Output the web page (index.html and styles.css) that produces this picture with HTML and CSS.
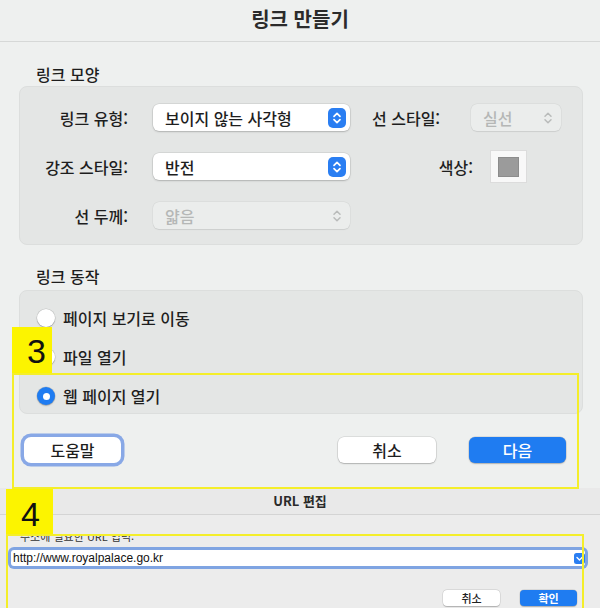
FILE: index.html
```html
<!DOCTYPE html>
<html lang="ko">
<head>
<meta charset="utf-8">
<title>링크 만들기</title>
<link rel="stylesheet" href="styles.css">
</head>
<body>
<div class="screen">
  <div class="dlg">
    <div class="titlebar"><h1 class="title">링크 만들기</h1></div>
    <div class="body">
      <div class="sec-label">링크 모양</div>
      <div class="panel panel-look">
        <div class="row">
          <span class="lbl">링크 유형:</span>
          <div class="select"><span>보이지 않는 사각형</span>
            <svg class="stepper" width="18" height="20" viewBox="0 0 18 20"><rect width="18" height="20" rx="5" fill="#2a7ef2"/><path d="M6 8.3 9 5.3 12 8.3M6 11.7 9 14.7 12 11.7" fill="none" stroke="#fff" stroke-width="1.7" stroke-linecap="round" stroke-linejoin="round"/></svg>
          </div>
          <span class="lbl2">선 스타일:</span>
          <div class="select select-sm disabled"><span>실선</span>
            <svg class="stepper" width="18" height="20" viewBox="0 0 18 20"><path d="M6 8.3 9 5.3 12 8.3M6 11.7 9 14.7 12 11.7" fill="none" stroke="#b9bbba" stroke-width="1.5" stroke-linecap="round" stroke-linejoin="round"/></svg>
          </div>
        </div>
        <div class="row">
          <span class="lbl">강조 스타일:</span>
          <div class="select"><span>반전</span>
            <svg class="stepper" width="18" height="20" viewBox="0 0 18 20"><rect width="18" height="20" rx="5" fill="#2a7ef2"/><path d="M6 8.3 9 5.3 12 8.3M6 11.7 9 14.7 12 11.7" fill="none" stroke="#fff" stroke-width="1.7" stroke-linecap="round" stroke-linejoin="round"/></svg>
          </div>
          <span class="lbl3">색상:</span>
          <div class="well"><span class="swatch"></span></div>
        </div>
        <div class="row">
          <span class="lbl">선 두께:</span>
          <div class="select disabled"><span>얇음</span>
            <svg class="stepper" width="18" height="20" viewBox="0 0 18 20"><path d="M6 8.3 9 5.3 12 8.3M6 11.7 9 14.7 12 11.7" fill="none" stroke="#b9bbba" stroke-width="1.5" stroke-linecap="round" stroke-linejoin="round"/></svg>
          </div>
        </div>
      </div>
      <div class="sec-label sec-label2">링크 동작</div>
      <div class="panel panel-action">
        <div class="radio-row"><span class="radio"></span><span>페이지 보기로 이동</span></div>
        <div class="radio-row"><span class="radio"></span><span>파일 열기</span></div>
        <div class="radio-row"><span class="radio on"><span class="dot"></span></span><span>웹 페이지 열기</span></div>
      </div>
      <div class="btn-row">
        <button class="btn btn-help">도움말</button>
        <span class="spacer"></span>
        <button class="btn btn-cancel">취소</button>
        <button class="btn btn-primary">다음</button>
      </div>
    </div>
  </div>
  <div class="dlg2">
    <div class="titlebar2">URL 편집</div>
    <div class="body2">
      <div class="url-label"><span>주소에 필요한 URL 입력:</span></div>
      <div class="url-field"><span>http://www.royalpalace.go.kr</span>
        <svg width="11" height="11" viewBox="0 0 11 11"><rect width="11" height="11" rx="2.5" fill="#2a7ef2"/><path d="M3 4.6 5.5 7.1 8 4.6" fill="none" stroke="#fff" stroke-width="1.4" stroke-linecap="round" stroke-linejoin="round"/></svg>
      </div>
      <div class="btn-row2">
        <button class="btn2">취소</button>
        <button class="btn2 btn2-primary">확인</button>
      </div>
    </div>
  </div>
  <div class="badge badge3">3</div>
  <div class="hl hl1"></div>
  <div class="badge badge4">4</div>
  <div class="hl hl2"></div>
</div>
</body>
</html>
```
FILE: styles.css
```css
html, body {
  margin: 0;
  padding: 0;
}
body {
  width: 600px;
  height: 608px;
  overflow: hidden;
  background: #eef0ef;
  font-family: "Noto Sans CJK KR", "Noto Sans", sans-serif;
  font-weight: 500;
  color: #1e1e1e;
}
.screen {
  position: relative;
  width: 600px;
  height: 608px;
}
.dlg {
  height: 488px;
  background: #eef0ef;
}
.titlebar {
  height: 41px;
  border-bottom: 1px solid #d6d8d7;
  display: flex;
  justify-content: center;
  align-items: center;
}
.title {
  margin: 0;
  font-size: 20px;
  font-weight: 700;
  line-height: 24px;
  color: #2b2b2b;
  padding-bottom: 4px;
}
.body {
  padding: 0 17px 0 19px;
}
.sec-label {
  font-size: 16px;
  line-height: 20px;
  padding-left: 17px;
  margin: 22px 0 2px;
}
.sec-label2 {
  margin: 21px 0 4px;
}
.panel {
  box-sizing: border-box;
  background: #e4e6e5;
  border: 1px solid #dcdedd;
  border-radius: 8px;
}
.panel-look {
  height: 159px;
  padding-top: 17px;
  display: flex;
  flex-direction: column;
  gap: 22px;
}
.row {
  display: flex;
  align-items: center;
  height: 27px;
  font-size: 16px;
}
.lbl {
  width: 108px;
  text-align: right;
  margin-right: 25px;
  white-space: nowrap;
}
.lbl2 {
  width: 77px;
  margin-left: 22px;
  margin-right: 22px;
  white-space: nowrap;
}
.lbl3 {
  width: 123px;
  text-align: right;
  margin-right: 17px;
}
.select {
  box-sizing: border-box;
  width: 197px;
  height: 27px;
  background: #fff;
  border-radius: 6px;
  box-shadow: 0 0 0 0.5px rgba(0, 0, 0, 0.12), 0 1px 2px rgba(0, 0, 0, 0.18);
  display: flex;
  align-items: center;
  justify-content: space-between;
  padding: 0 4px 0 12px;
  font-size: 16px;
  line-height: 20px;
}
.select-sm {
  width: 90px;
  padding-left: 12px;
}
.disabled {
  background: #ebedec;
  color: #b5b7b6;
  box-shadow: 0 0 0 0.5px rgba(0, 0, 0, 0.05), 0 0.5px 1px rgba(0, 0, 0, 0.08);
}
.stepper {
  display: block;
  flex: none;
}
.well {
  box-sizing: border-box;
  width: 37px;
  height: 33px;
  margin: -3px 0;
  background: #f8f8f8;
  border: 1px solid #dcdcdc;
  display: flex;
  align-items: center;
  justify-content: center;
}
.swatch {
  width: 21px;
  height: 20px;
  box-sizing: border-box;
  background: #9b9b9b;
  border: 1px solid #8c8c8c;
}
.panel-action {
  height: 124px;
  padding-top: 15px;
  display: flex;
  flex-direction: column;
  gap: 15px;
}
.radio-row {
  display: flex;
  align-items: center;
  height: 24px;
  padding-left: 17px;
  gap: 8px;
  font-size: 16px;
  line-height: 20px;
}
.radio {
  width: 18px;
  height: 18px;
  border-radius: 50%;
  background: #fff;
  box-shadow: 0 0 0 0.5px rgba(0, 0, 0, 0.15), 0 1px 1.5px rgba(0, 0, 0, 0.2);
  display: flex;
  align-items: center;
  justify-content: center;
  flex: none;
}
.radio.on {
  background: #1f7cf1;
}
.dot {
  width: 7px;
  height: 7px;
  border-radius: 50%;
  background: #fff;
}
.btn-row {
  margin-top: 23px;
  height: 26px;
  display: flex;
  align-items: center;
  padding-left: 5px;
  padding-right: 17px;
}
.spacer {
  flex: 1;
}
.btn {
  height: 26px;
  width: 98px;
  padding: 0;
  border: none;
  border-radius: 6px;
  background: #fff;
  box-shadow: 0 0 0 0.5px rgba(0, 0, 0, 0.15), 0 1px 1.5px rgba(0, 0, 0, 0.2);
  font-family: "Noto Sans CJK KR", "Noto Sans", sans-serif;
  font-weight: 500;
  font-size: 16px;
  line-height: 20px;
  color: #1e1e1e;
}
.btn-help {
  width: 97px;
  border-radius: 7px;
  box-shadow: 0 0 0 3.5px #88a8e6;
}
.btn-cancel {
  margin-right: 33px;
}
.btn-primary {
  width: 97px;
  background: #1f7cf1;
  color: #fff;
}
.dlg2 {
  height: 120px;
  background: #ececec;
}
.titlebar2 {
  height: 26px;
  border-bottom: 1px solid #d4d4d4;
  background: #e9e9e9;
  text-align: center;
  font-size: 13px;
  font-weight: 700;
  line-height: 26px;
  color: #2a2a2a;
}
.body2 {
  padding: 0 15px 0 11px;
}
.url-label {
  height: 6px;
  margin-top: 21px;
  overflow: hidden;
  display: flex;
  align-items: flex-end;
  padding-left: 9px;
  font-size: 11px;
  font-weight: 400;
  line-height: 12px;
  color: #333;
}
.url-field {
  margin-top: 8px;
  height: 16px;
  background: #fff;
  border-radius: 3px;
  box-shadow: 0 0 0 3px #7fa4e2;
  display: flex;
  align-items: center;
  justify-content: space-between;
  padding: 0 0 0 2px;
  font-family: "Liberation Sans", Arial, sans-serif;
  font-weight: 400;
  font-size: 12px;
  color: #111;
}
.url-field svg {
  display: block;
}
.btn-row2 {
  margin-top: 24px;
  display: flex;
  justify-content: flex-end;
  gap: 20px;
  padding-right: 8px;
}
.btn2 {
  width: 57px;
  height: 16px;
  padding: 0;
  border: none;
  border-radius: 4px;
  background: #fff;
  box-shadow: 0 0 0 0.5px rgba(0, 0, 0, 0.12), 0 0.5px 1px rgba(0, 0, 0, 0.2);
  font-family: "Noto Sans CJK KR", sans-serif;
  font-weight: 500;
  font-size: 11px;
  line-height: 16px;
  color: #222;
}
.btn2-primary {
  background: #1f7cf1;
  color: #fff;
  font-weight: 700;
}
.badge {
  position: absolute;
  background: #fcf400;
  color: #111;
  font-family: "Liberation Sans", Arial, sans-serif;
  font-weight: 400;
  font-size: 34px;
  line-height: 34px;
  box-sizing: border-box;
  display: flex;
}
.badge3 {
  left: 12px;
  top: 327px;
  width: 40px;
  height: 47px;
  align-items: center;
  padding-left: 15px;
}
.badge4 {
  left: 6px;
  top: 489px;
  width: 47px;
  height: 46px;
  align-items: flex-end;
  padding-left: 15px;
  padding-bottom: 4px;
}
.hl {
  position: absolute;
  box-sizing: border-box;
  border: 2.5px solid #f4ee2a;
}
.hl1 {
  left: 12px;
  top: 373px;
  width: 567px;
  height: 116px;
}
.hl2 {
  left: 6px;
  top: 534px;
  width: 578px;
  height: 76px;
}
```
